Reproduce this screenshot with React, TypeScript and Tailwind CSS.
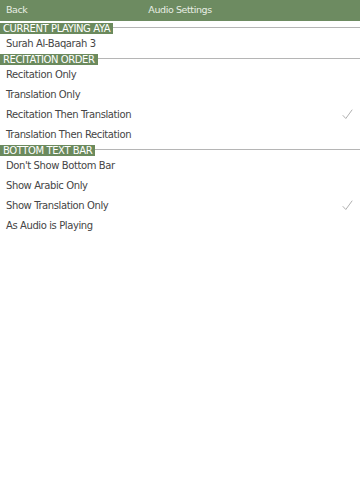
import React from "react";

type Row = { label: string; checked?: boolean };

const sections: { title: string; rows: Row[] }[] = [
  { title: "Current Playing Aya", rows: [{ label: "Surah Al-Baqarah 3" }] },
  {
    title: "Recitation Order",
    rows: [
      { label: "Recitation Only" },
      { label: "Translation Only" },
      { label: "Recitation Then Translation", checked: true },
      { label: "Translation Then Recitation" },
    ],
  },
  {
    title: "Bottom Text Bar",
    rows: [
      { label: "Don't Show Bottom Bar" },
      { label: "Show Arabic Only" },
      { label: "Show Translation Only", checked: true },
      { label: "As Audio is Playing" },
    ],
  },
];

function Check() {
  return (
    <svg width="11" height="11" viewBox="0 0 11 11" fill="none">
      <path d="M1 6.5 L3.8 9.5 L10 1" stroke="#b0b0b0" strokeWidth="1" strokeLinecap="round" strokeLinejoin="round" />
    </svg>
  );
}

export default function App() {
  return (
    <div className="w-[360px] h-[480px] bg-white font-['DejaVu_Sans',sans-serif] overflow-hidden">
      <div className="h-[21px] bg-[#6d8b61] grid grid-cols-3 items-center text-[9.5px] tracking-[-0.4px] text-[#e8eee4]">
        <span className="pl-[6px]">Back</span>
        <span className="text-center whitespace-nowrap">Audio Settings</span>
        <span />
      </div>
      <div className="pt-[2px]">
        {sections.map((s) => (
          <div key={s.title}>
            <div className="flex h-[11px]">
              <span className="bg-[#6b8a5d] text-white uppercase text-[10px] tracking-[-0.4px] leading-[11px] px-[3px] whitespace-nowrap">
                {s.title}
              </span>
              <div className="flex-1 h-px bg-[#b5b5b5] mt-[4px]" />
            </div>
            {s.rows.map((r) => (
              <div key={r.label} className="h-[20px] flex items-center justify-between pl-[6px] pr-[7px] pb-[2px] text-[10px] tracking-[-0.4px] text-[#454545]">
                <span>{r.label}</span>
                {r.checked && <Check />}
              </div>
            ))}
          </div>
        ))}
      </div>
    </div>
  );
}
